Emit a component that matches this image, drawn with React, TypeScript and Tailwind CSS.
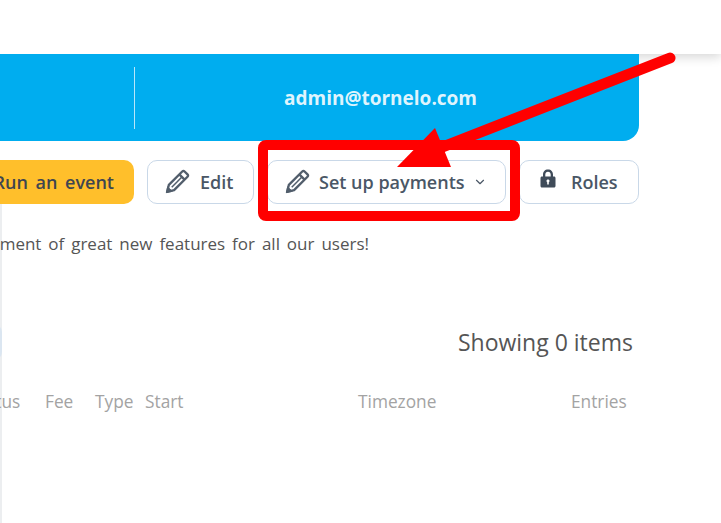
import { ChevronDown } from "lucide-react";

const columns = [
  { label: "Status", width: "w-[75px]" },
  { label: "Fee", width: "w-[50px]" },
  { label: "Type", width: "w-[50px]" },
  { label: "Start", width: "w-[213px]" },
  { label: "Timezone", width: "w-[213px]" },
  { label: "Entries", width: "w-[56px]" },
];

function PencilIcon({ className }: { className: string }) {
  return (
    <svg className={className} viewBox="0 0 24 24" fill="none" stroke="currentColor" strokeWidth="2" strokeLinejoin="round">
      <path d="M3.5 20.5 L5 14.5 L16.5 3 Q17.5 2 18.5 3 L21 5.5 Q22 6.5 21 7.5 L9.5 19 Z" />
      <path d="M14 5.5 L18.5 10" />
      <path d="M7.5 16.5 L16 8" strokeWidth="1.3" />
      <path d="M2.8 21.2 L4 16 L8 20 Z" fill="currentColor" strokeWidth="0.6" />
    </svg>
  );
}

function LockIcon({ className }: { className: string }) {
  return (
    <svg className={className} viewBox="0 0 16 19" fill="currentColor">
      <path
        fillRule="evenodd"
        d="M8 0.5 C4.9 0.5 3 2.6 3 5.5 V7.5 H2 C1 7.5 0.5 8.1 0.5 9 V17 C0.5 17.9 1.1 18.5 2 18.5 H14 C14.9 18.5 15.5 17.9 15.5 17 V9 C15.5 8.1 14.9 7.5 14 7.5 H13 V5.5 C13 2.6 11.1 0.5 8 0.5 Z M5.3 7.5 V5.5 C5.3 3.8 6.3 2.7 8 2.7 C9.7 2.7 10.7 3.8 10.7 5.5 V7.5 Z M8 10.5 C7.1 10.5 6.5 11.1 6.5 11.9 C6.5 12.5 6.8 12.9 7.2 13.2 V15.5 H8.8 V13.2 C9.2 12.9 9.5 12.5 9.5 11.9 C9.5 11.1 8.9 10.5 8 10.5 Z"
      />
    </svg>
  );
}

function OutlineButton({ children, width }: { children: React.ReactNode; width: string }) {
  return (
    <button className={`${width} h-[44px] shrink-0 flex items-center rounded-[10px] border border-[#c9d8e8] bg-white text-[18px] font-semibold text-[#4a5766]`}>
      {children}
    </button>
  );
}

// Red arrow and box drawn on top of the screenshot
function Annotation() {
  return (
    <svg className="absolute left-0 top-0 pointer-events-none" width="721" height="523">
      <rect x="263" y="145" width="252" height="71" rx="3" fill="none" stroke="#ff0000" strokeWidth="10" />
      <line x1="670" y1="58" x2="440" y2="148" stroke="#ff0000" strokeWidth="11" strokeLinecap="round" />
      <polygon points="435,128 397,167 451,167" fill="#ff0000" />
    </svg>
  );
}

export default function App() {
  return (
    <div className="relative h-[523px] w-[721px] overflow-hidden bg-white font-['Open_Sans',sans-serif]">
      <div className="h-[54px] bg-white shadow-[0_3px_10px_rgba(0,0,0,0.16)]" />
      <div className="pr-[82px]">
        <div className="relative flex h-[87px] items-center rounded-br-[16px] bg-[#00adef]">
          <div className="h-[62px] w-[135px] border-r border-[#b9e6fa]" />
          <div className="flex-1 pr-[13px] pt-[2px] text-center text-[19px] font-bold text-[#dff4fd]">admin@tornelo.com</div>
        </div>
      </div>

      <div className="h-[382px] border-l-2 border-[#eceef0] pr-[82px]">
        <div className="-ml-[2px] mt-[19px] flex justify-end gap-[13px]">
          <button className="flex h-[44px] w-[200px] shrink-0 items-center justify-end rounded-[10px] bg-[#ffbf2b] pr-[20px] text-[18px] font-semibold text-[#3f4650] [word-spacing:3px]">
            Run an event
          </button>
          <OutlineButton width="w-[107px]">
            <PencilIcon className="ml-[15px] h-[28px] w-[28px] shrink-0 text-[#525e6c]" />
            <span className="ml-[9px]">Edit</span>
          </OutlineButton>
          <OutlineButton width="w-[239px]">
            <PencilIcon className="ml-[15px] h-[28px] w-[28px] shrink-0 text-[#525e6c]" />
            <span className="ml-[8px] whitespace-nowrap">Set up payments</span>
            <ChevronDown className="ml-[8px] h-[14px] w-[14px]" strokeWidth={2} />
          </OutlineButton>
          <OutlineButton width="w-[120px]">
            <LockIcon className="ml-[20px] mb-[7px] h-[19px] w-[16px] shrink-0 text-[#3f4b59]" />
            <span className="ml-[15px]">Roles</span>
          </OutlineButton>
        </div>

        <div className="-ml-[2px] mt-[28px] flex h-[24px] justify-end pr-[270px] text-[17px] leading-[24px] text-[#555555]">
          <p className="whitespace-nowrap [word-spacing:2.5px]">We are continually working on the development of great new features for all our users!</p>
        </div>

        <div className="-ml-[2px] mt-[66px] flex h-[40px] items-center justify-between pr-[6px]">
          <div className="-ml-[40px] h-[36px] w-[42px] rounded-[8px] border-2 border-[#dbe6f1]" />
          <span className="text-[23px] text-[#555555]">Showing 0 items</span>
        </div>

        <div className="-ml-[32px] mt-[27px] flex text-[17.3px] text-[#a3a3a3]">
          {columns.map((col) => (
            <div key={col.label} className={`${col.width} shrink-0`}>
              {col.label}
            </div>
          ))}
        </div>
      </div>

      <Annotation />
    </div>
  );
}
